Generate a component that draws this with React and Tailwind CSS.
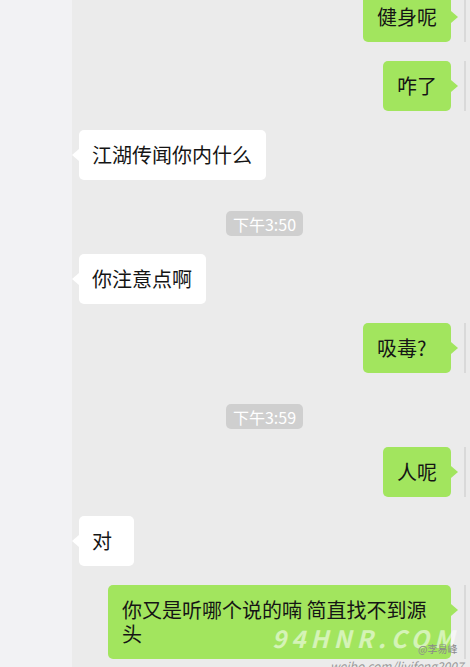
import React from "react";

const font = { fontFamily: '"Noto Sans CJK SC", "Noto Sans", sans-serif' };

const messages = [
  { type: "me", text: "健身呢" },
  { type: "me", text: "咋了" },
  { type: "other", text: "江湖传闻你内什么" },
  { type: "time", text: "下午3:50" },
  { type: "other", text: "你注意点啊" },
  { type: "me", text: "吸毒?", wide: true },
  { type: "time", text: "下午3:59" },
  { type: "me", text: "人呢" },
  { type: "other", text: "对" },
  { type: "me", text: "你又是听哪个说的喃 简直找不到源头" },
];

function MyBubble({ text, wide }) {
  return (
    <div className="flex justify-end items-start pr-[4px]">
      <div
        className={
          "relative bg-[#a2e55e] rounded-[5px] py-[13px] pl-[14px] pr-[14px] text-[20px] leading-[24px] text-[#151515] max-w-[343px] " +
          (wide ? "w-[88px]" : "")
        }
      >
        {text}
        <span className="absolute left-full top-[19px] w-0 h-0 border-y-[6px] border-y-transparent border-l-[7px] border-l-[#a2e55e]" />
      </div>
      <div className="ml-[13px] w-[2px] self-stretch bg-[#d9d9d9]" />
    </div>
  );
}

function OtherBubble({ text }) {
  return (
    <div className="flex justify-start pl-[7px]">
      <div className="relative bg-white rounded-[5px] py-[13px] pl-[13px] pr-[14px] min-w-[55px] text-[20px] leading-[24px] text-[#151515]">
        {text}
        <span className="absolute right-full top-[19px] w-0 h-0 border-y-[6px] border-y-transparent border-r-[7px] border-r-white" />
      </div>
    </div>
  );
}

function TimeTag({ text }) {
  return (
    <div className="flex justify-center pr-[13px] mt-[12px] mb-[-1px]">
      <div className="bg-[#cfcfcf] text-white rounded-[5px] h-[25px] w-[77px] flex items-center justify-center text-[16px] leading-none">
        {text}
      </div>
    </div>
  );
}

export default function App() {
  return (
    <div className="relative w-[470px] h-[667px] overflow-hidden flex bg-[#ebebeb]" style={font}>
      <div className="w-[72px] shrink-0 bg-[#f2f2f4]" />
      <div className="flex-1 flex flex-col gap-[19px] mt-[-8px]">
        {messages.map((m, i) => {
          if (m.type === "me") return <MyBubble key={i} text={m.text} wide={m.wide} />;
          if (m.type === "other") return <OtherBubble key={i} text={m.text} />;
          return <TimeTag key={i} text={m.text} />;
        })}
      </div>

      {/* watermark overlay */}
      <div className="absolute left-[272px] top-[626px] text-[24px] italic tracking-[5px] text-white/55 font-bold leading-none pointer-events-none">
        94HNR.COM
      </div>
      <div className="absolute left-[418px] top-[644px] text-[10px] text-[#8a8a8a] leading-none">
        @李易峰
      </div>
      <div className="absolute left-[330px] top-[660px] text-[12px] italic text-[#9a9a9a] leading-none">
        weibo.com/liyifeng2007
      </div>
    </div>
  );
}
